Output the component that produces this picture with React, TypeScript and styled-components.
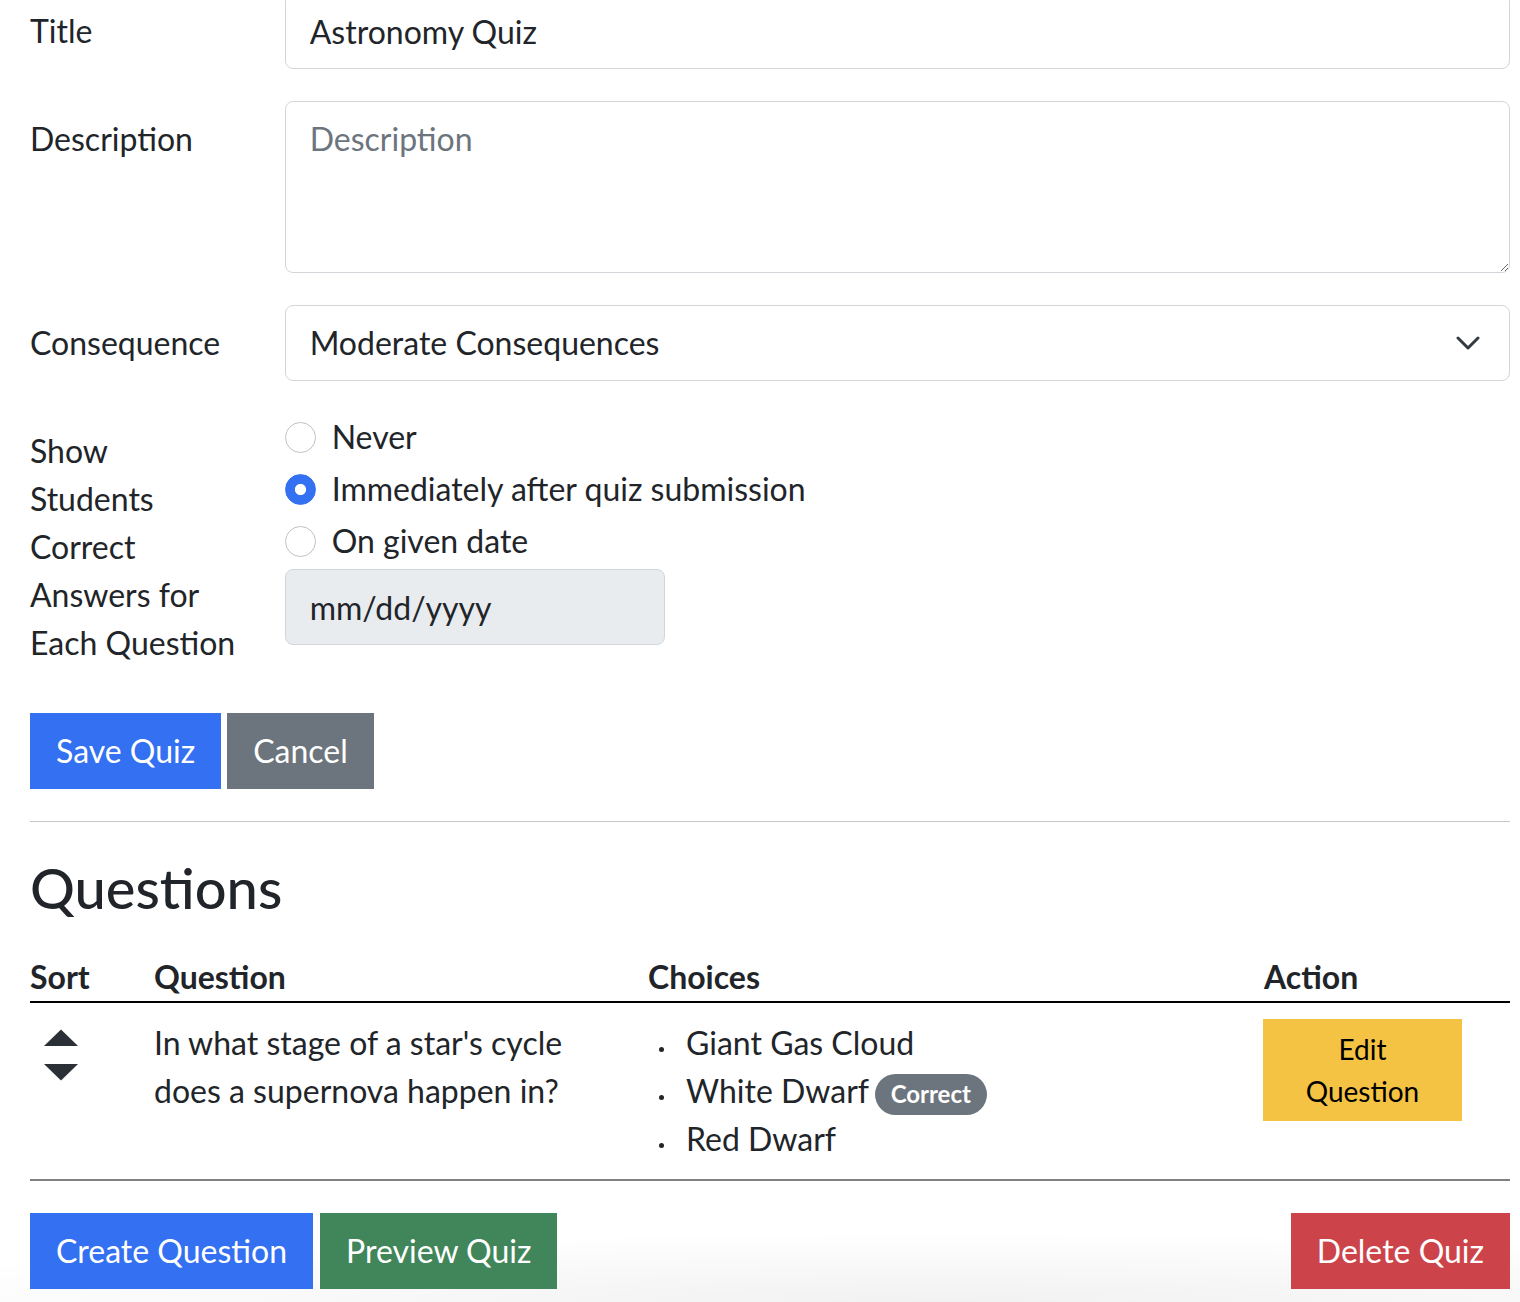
import React from "react";
import styled, { createGlobalStyle } from "styled-components";

const GlobalStyle = createGlobalStyle`
  *, *::before, *::after { box-sizing: border-box; }
  html {
    height: 100%;
    background: #fff radial-gradient(ellipse 1150px 70px at 62% 100%, rgba(0,0,0,0.055), rgba(0,0,0,0) 100%) no-repeat;
  }
  body {
    margin: 0;
    font-family: Lato, "Open Sans", "Noto Sans", sans-serif;
    font-size: 32px;
    line-height: 1.5;
    color: #212529;
    background: transparent;
  }
`;

const Page = styled.div`
  margin-top: -7px;
  padding: 0 10px 0 30px;
`;

const FormRow = styled.div`
  display: grid;
  grid-template-columns: 206.67px 1fr;
  column-gap: 48px;
  margin-bottom: 32px;
`;

const FieldLabel = styled.label`
  display: block;
  padding: 14px 0;
  line-height: 48px;
`;

const FieldCol = styled.div`
  min-width: 0;
`;

const TextInput = styled.input`
  display: block;
  width: 100%;
  height: 76px;
  padding: 13px 24px;
  font: inherit;
  line-height: 48px;
  color: #212529;
  background: #fff;
  border: 1px solid #d2d6db;
  border-radius: 8px;
  outline: none;
`;

const TextArea = styled.textarea`
  display: block;
  width: 100%;
  height: 172px;
  padding: 13px 24px;
  font: inherit;
  line-height: 48px;
  color: #212529;
  background: #fff;
  border: 1px solid #d2d6db;
  border-radius: 8px;
  outline: none;
  resize: vertical;
  &::placeholder { color: #6c757d; }
`;

const SelectWrap = styled.div`
  position: relative;
`;

const SelectField = styled.select`
  display: block;
  width: 100%;
  height: 76px;
  padding: 13px 72px 13px 24px;
  font: inherit;
  line-height: 48px;
  color: #212529;
  background: #fff;
  border: 1px solid #d2d6db;
  border-radius: 8px;
  appearance: none;
  -webkit-appearance: none;
  outline: none;
`;

const Chevron = styled.svg`
  position: absolute;
  right: 30px;
  top: 50%;
  width: 24px;
  height: 14px;
  transform: translateY(-50%);
  pointer-events: none;
`;

const RadioItem = styled.div`
  display: flex;
  align-items: flex-start;
  min-height: 48px;
  margin-bottom: 4px;
`;

const Radio = styled.input`
  appearance: none;
  -webkit-appearance: none;
  flex: none;
  width: 31px;
  height: 31px;
  margin: 9px 16px 0 0;
  border-radius: 50%;
  border: 1.5px solid #c2c2c2;
  background: #fff;
  &:checked {
    border-color: #3370f2;
    background: radial-gradient(circle, #fff 0 5.2px, #3370f2 6px);
  }
`;

const RadioLabel = styled.label`
  line-height: 48px;
`;

const DateInput = styled(TextInput)`
  width: 380px;
  margin-top: 2px;
  background: #e9ecef;
`;

type Variant = "primary" | "secondary" | "success" | "danger" | "warning";

const colors: Record<Variant, string> = {
  primary: "#3370f2",
  secondary: "#6c757d",
  success: "#41865a",
  danger: "#cc444a",
  warning: "#f5c343",
};

const Btn = styled.button<{ $variant: Variant; $push?: boolean }>`
  height: 76px;
  padding: 13px 25px;
  font: inherit;
  line-height: 48px;
  color: #fff;
  background: ${(p) => colors[p.$variant]};
  border: 1px solid ${(p) => colors[p.$variant]};
  border-radius: 0;
  white-space: nowrap;
  cursor: pointer;
  margin-left: ${(p) => (p.$push ? "auto" : "0")};
`;

const ButtonRow = styled.div<{ $gap: number }>`
  display: flex;
  gap: ${(p) => p.$gap}px;
`;

const Divider = styled.hr`
  margin: 32px 0;
  border: 0;
  border-top: 1px solid rgba(33, 37, 41, 0.25);
`;

const Heading = styled.h2`
  margin: 0 0 16px;
  font-size: 56px;
  font-weight: 500;
  line-height: 1.2;
`;

const Table = styled.table`
  width: 100%;
  table-layout: fixed;
  border-collapse: collapse;
  margin-bottom: 32px;
`;

const Th = styled.th`
  text-align: left;
  font-weight: 700;
  padding: 16px 0 0;
  line-height: 48px;
  border-bottom: 2px solid #000;
`;

const Td = styled.td<{ $padRight?: number }>`
  vertical-align: top;
  padding: 16px ${(p) => p.$padRight ?? 0}px 16px 0;
  line-height: 48px;
  border-bottom: 2px solid #808080;
`;

const SortArrows = styled.div`
  display: flex;
  flex-direction: column;
  gap: 18px;
  padding: 10px 0 0 14px;
`;

const ChoiceList = styled.ul`
  list-style: none;
  margin: 0;
  padding: 0;
`;

const ChoiceItem = styled.li`
  display: flex;
  align-items: flex-start;
  &::before {
    content: "";
    flex: none;
    width: 5px;
    height: 5px;
    margin: 28px 22px 0 11px;
    border-radius: 50%;
    background: #212529;
  }
`;

const Badge = styled.span`
  display: inline-block;
  margin-left: 6px;
  padding: 8.4px 15.6px;
  font-size: 24px;
  font-weight: 700;
  line-height: 1;
  color: #fff;
  background: #6c757d;
  border-radius: 999px;
  vertical-align: baseline;
`;

const EditBtn = styled.button`
  width: 199px;
  margin-left: -1px;
  padding: 8px 30px;
  font: inherit;
  font-size: 28px;
  line-height: 42px;
  color: #000;
  background: ${colors.warning};
  border: 1px solid ${colors.warning};
  border-radius: 0;
  cursor: pointer;
`;

const Caret = ({ up }: { up?: boolean }) => (
  <svg width="34" height="17" viewBox="0 0 34 17">
    <polygon
      points={up ? "17,0.5 34,17 0,17" : "0,0 34,0 17,16.5"}
      fill="#2b3036"
      strokeLinejoin="round"
    />
  </svg>
);

export default function App() {
  return (
    <>
      <GlobalStyle />
      <Page>
        <FormRow>
          <FieldLabel htmlFor="title">Title</FieldLabel>
          <FieldCol>
            <TextInput id="title" defaultValue="Astronomy Quiz" />
          </FieldCol>
        </FormRow>
        <FormRow>
          <FieldLabel htmlFor="desc">Description</FieldLabel>
          <FieldCol>
            <TextArea id="desc" placeholder="Description" rows={3} />
          </FieldCol>
        </FormRow>
        <FormRow>
          <FieldLabel htmlFor="cons">Consequence</FieldLabel>
          <FieldCol>
            <SelectWrap>
              <SelectField id="cons" defaultValue="moderate">
                <option value="moderate">Moderate Consequences</option>
              </SelectField>
              <Chevron viewBox="0 0 24 14">
                <path
                  d="M2 2l10 10 10-10"
                  fill="none"
                  stroke="#343a40"
                  strokeWidth="3"
                  strokeLinecap="round"
                  strokeLinejoin="round"
                />
              </Chevron>
            </SelectWrap>
          </FieldCol>
        </FormRow>
        <FormRow>
          <FieldLabel>Show Students Correct Answers for Each Question</FieldLabel>
          <FieldCol>
            <RadioItem>
              <Radio type="radio" name="show" id="r1" />
              <RadioLabel htmlFor="r1">Never</RadioLabel>
            </RadioItem>
            <RadioItem>
              <Radio type="radio" name="show" id="r2" defaultChecked />
              <RadioLabel htmlFor="r2">Immediately after quiz submission</RadioLabel>
            </RadioItem>
            <RadioItem>
              <Radio type="radio" name="show" id="r3" />
              <RadioLabel htmlFor="r3">On given date</RadioLabel>
            </RadioItem>
            <DateInput readOnly value="mm/dd/yyyy" />
          </FieldCol>
        </FormRow>

        <ButtonRow $gap={6}>
          <Btn $variant="primary">Save Quiz</Btn>
          <Btn $variant="secondary">Cancel</Btn>
        </ButtonRow>

        <Divider />

        <Heading>Questions</Heading>
        <Table>
          <colgroup>
            <col style={{ width: 124 }} />
            <col style={{ width: 494 }} />
            <col style={{ width: 616 }} />
            <col style={{ width: 246 }} />
          </colgroup>
          <thead>
            <tr>
              <Th>Sort</Th>
              <Th>Question</Th>
              <Th>Choices</Th>
              <Th>Action</Th>
            </tr>
          </thead>
          <tbody>
            <tr>
              <Td>
                <SortArrows>
                  <Caret up />
                  <Caret />
                </SortArrows>
              </Td>
              <Td $padRight={48}>In what stage of a star's cycle does a supernova happen in?</Td>
              <Td>
                <ChoiceList>
                  <ChoiceItem>
                    <span>Giant Gas Cloud</span>
                  </ChoiceItem>
                  <ChoiceItem>
                    <span>
                      White Dwarf<Badge>Correct</Badge>
                    </span>
                  </ChoiceItem>
                  <ChoiceItem>
                    <span>Red Dwarf</span>
                  </ChoiceItem>
                </ChoiceList>
              </Td>
              <Td>
                <EditBtn>Edit Question</EditBtn>
              </Td>
            </tr>
          </tbody>
        </Table>

        <ButtonRow $gap={7}>
          <Btn $variant="primary">Create Question</Btn>
          <Btn $variant="success">Preview Quiz</Btn>
          <Btn $variant="danger" $push>
            Delete Quiz
          </Btn>
        </ButtonRow>
      </Page>
    </>
  );
}
